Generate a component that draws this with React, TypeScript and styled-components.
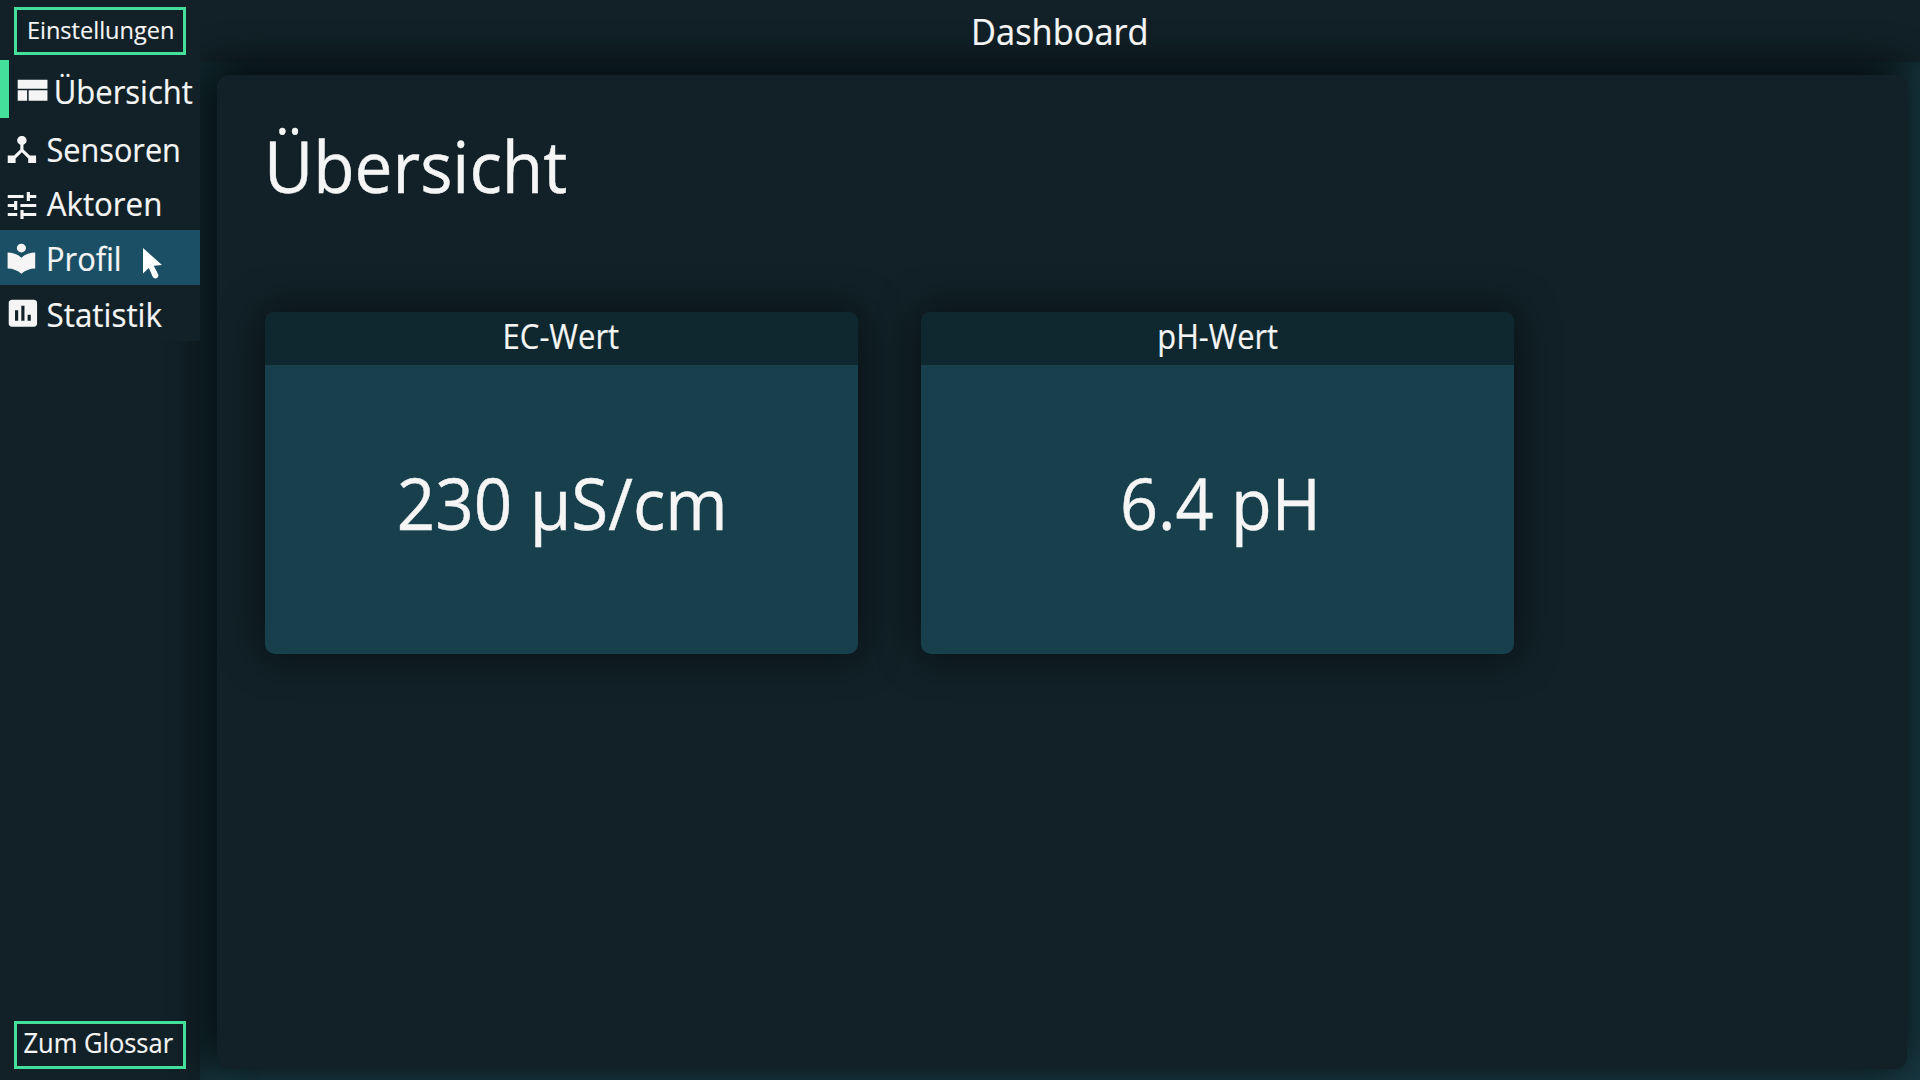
import React from 'react';
import styled, { createGlobalStyle } from 'styled-components';

const GlobalStyle = createGlobalStyle`
  * { box-sizing: border-box; }
  body {
    margin: 0;
    background: #17363f;
    color: #f5f5f5;
    font-family: "Open Sans", "Noto Sans", sans-serif;
    overflow: hidden;
  }
`;

const surface = '#112127';
const accent = '#44df9b';

const Page = styled.div`
  display: grid;
  grid-template: 62px 1fr / 200px 1fr;
  width: 1920px;
  height: 1080px;
`;

const ButtonSlot = styled.div`
  position: relative;
  z-index: 1;
  padding: 7px 14px 0;
  background: ${surface};
`;

const GlossarySlot = styled.div`
  position: relative;
  z-index: 1;
  padding: 0 14px;
`;

const Center = styled.div`
  display: flex;
  align-items: center;
  justify-content: center;
`;

const Text = styled.span<{ $size: number; $stretch: number; $dx?: number; $dy?: number; $left?: boolean }>`
  display: block;
  font-size: ${p => p.$size}px;
  line-height: 1;
  white-space: nowrap;
  -webkit-text-stroke: 0.006em currentColor;
  transform-origin: ${p => (p.$left ? 'left' : 'center')};
  transform: translate(${p => p.$dx ?? 0}px, ${p => p.$dy ?? 0}px) scaleX(${p => p.$stretch});
`;

const HeaderTitle = styled(Center)`
  background: ${surface};
  box-shadow: 0 0 40px rgba(0, 0, 0, 0.6);
`;

const OutlineButton = styled.button`
  display: flex;
  align-items: center;
  justify-content: center;
  width: 172px;
  height: 48px;
  padding: 0;
  border: 3px solid ${accent};
  background: ${surface};
  color: inherit;
  font-family: inherit;
`;

const Sidebar = styled.aside`
  grid-area: 2 / 1;
  display: flex;
  flex-direction: column;
  justify-content: space-between;
  padding-bottom: 11px;
  background: ${surface};
  box-shadow: 0 0 40px rgba(0, 0, 0, 0.6);
`;

const Nav = styled.nav`
  position: relative;
  z-index: 2;
  display: flex;
  flex-direction: column;
  margin-top: -2px;
`;

const NavItem = styled.a<{ $height: number; $active?: boolean; $hover?: boolean }>`
  display: flex;
  align-items: center;
  height: ${p => p.$height}px;
  border-left: ${p => (p.$active ? `9px solid ${accent}` : '0')};
  background: ${p => (p.$hover ? '#1b4f65' : surface)};
`;

const IconBox = styled.span<{ $indent: number; $dy: number }>`
  display: block;
  flex: none;
  width: 42px;
  height: 36px;
  padding-left: ${p => p.$indent}px;
  transform: translateY(${p => p.$dy}px);

  svg { display: block; overflow: visible; fill: #f5f5f5; }
`;

const Panel = styled.main`
  grid-area: 2 / 2;
  margin: 13px 13px 11px 17px;
  padding: 51px 48px 0;
  border-radius: 12px;
  background: ${surface};
  box-shadow: -6px -6px 40px rgba(0, 0, 0, 0.9);
`;

const Title = styled.h1`
  margin: 0;
  height: 186px;
  font-weight: 400;
`;

const Cards = styled.div`
  display: flex;
  gap: 63px;
`;

const Card = styled.section`
  display: flex;
  flex-direction: column;
  width: 593px;
  height: 342px;
  border-radius: 10px;
  overflow: hidden;
  background: #173f4c;
  box-shadow: 0 0 40px rgba(0, 0, 0, 0.6);
`;

const CardHead = styled(Center)`
  height: 53px;
  background: #0f272e;
`;

const CardBody = styled(Center)`
  flex: 1;
`;

const Cursor = styled.svg`
  position: absolute;
  left: 142px;
  top: 187px;
  fill: #fff;
`;

type Item = {
  label: string;
  height: number;
  stretch: number;
  dx: number;
  dy: number;
  iconW: number;
  iconH: number;
  indent: number;
  iconDy: number;
  path: string;
  active?: boolean;
  hover?: boolean;
};

const items: Item[] = [
  { label: 'Übersicht', height: 58, stretch: 0.92, dx: 2.7, dy: 3, iconW: 37.6, iconH: 36, indent: 3.5, iconDy: 1.3, active: true,
    path: 'M3 19h6v-7H3v7zm7 0h12v-7H10v7zM3 5v6h19V5H3z' },
  { label: 'Sensoren', height: 59, stretch: 0.91, dx: 4.5, dy: 2, iconW: 37.8, iconH: 36, indent: 2.6, iconDy: 1.5,
    path: 'M17 16l-4-4V8.82C14.16 8.4 15 7.3 15 6c0-1.66-1.34-3-3-3S9 4.34 9 6c0 1.3.84 2.4 2 2.82V12l-4 4H3v5h5v-3.05l4-4.2 4 4.2V21h5v-5h-4z' },
  { label: 'Aktoren', height: 53, stretch: 0.928, dx: 4.7, dy: 0, iconW: 38, iconH: 36, indent: 3.4, iconDy: 1.5,
    path: 'M3 17v2h6v-2H3zM3 5v2h10V5H3zm10 16v-2h8v-2h-8v-2h-2v6h2zM7 9v2H3v2h4v2h2V9H7zm14 4v-2H11v2h10zm-6-4h2V7h4V5h-4V3h-2v6z' },
  { label: 'Profil', height: 55, stretch: 0.915, dx: 4, dy: 1, iconW: 36.8, iconH: 35, indent: 3, iconDy: 0.8, hover: true,
    path: 'M12 11.55C9.64 9.35 6.48 8 3 8v11c3.48 0 6.64 1.35 9 3.55 2.36-2.19 5.52-3.55 9-3.55V8c-3.48 0-6.64 1.35-9 3.55zM12 8c1.66 0 3-1.34 3-3s-1.34-3-3-3-3 1.34-3 3 1.34 3 3 3z' },
  { label: 'Statistik', height: 56, stretch: 0.932, dx: 4.5, dy: 2, iconW: 37.8, iconH: 36, indent: 3.5, iconDy: 0.3,
    path: 'M19 3H5c-1.1 0-2 .9-2 2v14c0 1.1.9 2 2 2h14c1.1 0 2-.9 2-2V5c0-1.1-.9-2-2-2zM9 17H7v-7h2v7zm4 0h-2V7h2v10zm4 0h-2v-4h2v4z' },
];

const cards = [
  { name: 'EC-Wert', nameStretch: 0.912, nameDx: -1, value: '230 µS/cm', valueStretch: 0.942, valueDx: 0.5 },
  { name: 'pH-Wert', nameStretch: 0.905, nameDx: 0, value: '6.4 pH', valueStretch: 0.932, valueDx: 2.6 },
];

export default function App() {
  return (
    <>
      <GlobalStyle />
      <Page>
        <Sidebar>
          <Nav>
            {items.map(it => (
              <NavItem key={it.label} $height={it.height} $active={it.active} $hover={it.hover}>
                <IconBox $indent={it.indent} $dy={it.iconDy}>
                  <svg width={it.iconW} height={it.iconH} viewBox="0 0 24 24" preserveAspectRatio="none">
                    <path d={it.path} />
                  </svg>
                </IconBox>
                <Text $size={33.7} $stretch={it.stretch} $dx={it.dx} $dy={it.dy} $left>{it.label}</Text>
              </NavItem>
            ))}
            <Cursor width="22" height="33" viewBox="0 0 22 33">
              <path d="M1 1 L20 18 L11.8 18.7 L16.2 27.6 Q17 30 14.4 31.3 Q12 32 10.8 30 L6.8 20.9 L1 26.5 Z" />
            </Cursor>
          </Nav>
          <GlossarySlot>
            <OutlineButton>
              <Text $size={27.2} $stretch={0.937} $dx={-1.5} $dy={-1.7}>Zum Glossar</Text>
            </OutlineButton>
          </GlossarySlot>
        </Sidebar>
        <ButtonSlot>
          <OutlineButton>
            <Text $size={23.2} $stretch={1.015} $dx={1} $dy={-0.5}>Einstellungen</Text>
          </OutlineButton>
        </ButtonSlot>
        <HeaderTitle>
          <Text $size={37} $stretch={0.93} $dx={-0.6} $dy={-0.6}>Dashboard</Text>
        </HeaderTitle>
        <Panel>
          <Title>
            <Text $size={71.5} $stretch={0.945} $dx={-1} $dy={4.4} $left>Übersicht</Text>
          </Title>
          <Cards>
            {cards.map(c => (
              <Card key={c.name}>
                <CardHead>
                  <Text $size={34} $stretch={c.nameStretch} $dx={c.nameDx} $dy={-3.5}>{c.name}</Text>
                </CardHead>
                <CardBody>
                  <Text $size={71.5} $stretch={c.valueStretch} $dx={c.valueDx} $dy={-7.4}>{c.value}</Text>
                </CardBody>
              </Card>
            ))}
          </Cards>
        </Panel>
      </Page>
    </>
  );
}
